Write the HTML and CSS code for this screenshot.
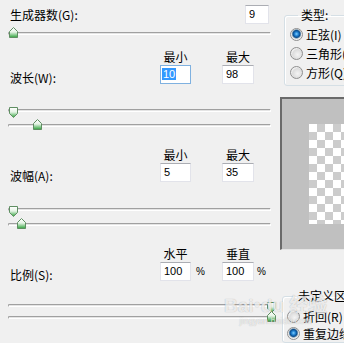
FILE: index.html
```html
<!DOCTYPE html>
<html lang="zh-CN">
<head>
<meta charset="UTF-8" />
<title>波浪</title>
<link rel="stylesheet" href="styles.css">
</head>
<body>
<div class="dialog">
  <div class="left">
    <div class="row-count">
      <span class="label">生成器数(G):</span>
      <span class="field count">9</span>
    </div>
    <div class="slider s1">
      <span class="thumb up" style="left:0px"><svg viewBox="0 0 9 11"><use href="#thumb-up"/></svg></span>
    </div>

    <div class="param p-wave">
      <span class="head c2">最小</span><span class="head c4">最大</span>
      <span class="label">波长(W):</span>
      <span class="field c2 focused"><span class="sel">10</span></span>
      <span class="field c4">98</span>
    </div>
    <div class="slider s2a">
      <span class="thumb down" style="left:0px"><svg viewBox="0 0 9 11"><use href="#thumb-down"/></svg></span>
    </div>
    <div class="slider s2b">
      <span class="thumb up" style="left:24px"><svg viewBox="0 0 9 11"><use href="#thumb-up"/></svg></span>
    </div>

    <div class="param p-amp">
      <span class="head c2">最小</span><span class="head c4">最大</span>
      <span class="label">波幅(A):</span>
      <span class="field c2">5</span>
      <span class="field c4">35</span>
    </div>
    <div class="slider s3a">
      <span class="thumb down" style="left:0px"><svg viewBox="0 0 9 11"><use href="#thumb-down"/></svg></span>
    </div>
    <div class="slider s3b">
      <span class="thumb up" style="left:8px"><svg viewBox="0 0 9 11"><use href="#thumb-up"/></svg></span>
    </div>

    <div class="param p-scale">
      <span class="head c2">水平</span><span class="head c4">垂直</span>
      <span class="label">比例(S):</span>
      <span class="field c2">100</span><span class="pct c3">%</span>
      <span class="field c4">100</span><span class="pct c5">%</span>
    </div>
    <div class="slider s4a">
      <span class="thumb down" style="left:258px"><svg viewBox="0 0 9 11"><use href="#thumb-down"/></svg></span>
    </div>
    <div class="slider s4b">
      <span class="thumb up" style="left:258px"><svg viewBox="0 0 9 11"><use href="#thumb-up"/></svg></span>
    </div>
  </div>

  <div class="right">
    <fieldset class="group g-type">
      <legend>类型:</legend>
      <div class="radio-row"><span class="radio checked"></span>正弦(I)</div>
      <div class="radio-row"><span class="radio"></span>三角形(T)</div>
      <div class="radio-row"><span class="radio"></span>方形(Q)</div>
    </fieldset>

    <div class="preview">
      <div class="checker"></div>
    </div>

    <fieldset class="group g-undef">
      <legend>未定义区域:</legend>
      <div class="radio-row"><span class="radio"></span>折回(R)</div>
      <div class="radio-row"><span class="radio checked"></span>重复边缘像素(E)</div>
    </fieldset>
  </div>
</div>

<!-- watermark over the bottom of the dialog -->
<div class="watermark">
  <span class="wm-text">Bai<span class="wm-paw">●</span>du 经验</span>
  <span class="wm-url">jingyan.baidu.com</span>
</div>

<svg class="defs" width="0" height="0">
  <defs>
    <linearGradient id="tg" x1="0" y1="0" x2="0" y2="1">
      <stop offset="0" stop-color="#ffffff"/>
      <stop offset="0.45" stop-color="#e6f4e6"/>
      <stop offset="1" stop-color="#2fa33c"/>
    </linearGradient>
    <path id="thumb-up" d="M4.5 0.5 L8.5 4.5 L8.5 10.5 L0.5 10.5 L0.5 4.5 Z" fill="url(#tg)" stroke="#5f8e62"/>
    <path id="thumb-down" d="M0.5 0.5 H8.5 V6.5 L4.5 10.5 L0.5 6.5 Z" fill="url(#tg)" stroke="#5f8e62"/>
  </defs>
</svg>
</body>
</html>
```

FILE: styles.css
```css
/* Base */
* {
  box-sizing: border-box;
}
html, body {
  overflow: hidden;
}
body {
  margin: 0;
  width: 344px;
  height: 343px;
  background-color: #f0f0f0;
  color: #000;
  font-family: "Noto Sans CJK SC", "Liberation Sans", sans-serif;
  font-size: 12px;
  position: relative;
}
.defs {
  position: absolute;
}
.dialog {
  display: flex;
}
.left {
  flex: none;
  width: 274px;
  padding-top: 5px;
}
.right {
  flex: none;
  width: 130px;
  margin-left: 6px;
}

/* Text boxes */
.label {
  line-height: 14px;
  white-space: nowrap;
}
.field {
  display: block;
  height: 19px;
  background: #fff;
  border: 1px solid #e2e3ea;
  border-top-color: #abadb3;
  font-family: "Liberation Sans", sans-serif;
  font-size: 11px;
  line-height: 17px;
  padding-left: 3px;
}
.field.focused {
  border-color: #7fb1e0;
  padding-left: 1px;
}
.sel {
  background: #3399ff;
  color: #fff;
  padding: 0 1px;
}
.row-count {
  display: flex;
  align-items: center;
  justify-content: space-between;
  padding: 0 5px 0 10px;
}
.row-count .field {
  width: 24px;
}

/* Parameter blocks: label + two boxes */
.param {
  display: grid;
  grid-template-columns: 150px 31px 31px 32px 20px;
  grid-template-rows: 14px 19px;
  padding-left: 10px;
}
.param .head {
  grid-row: 1;
  text-align: center;
  line-height: 12px;
}
.param .label {
  grid-row: 2;
  grid-column: 1;
  align-self: end;
  line-height: 12px;
  margin-bottom: 0;
}
.param .field {
  grid-row: 2;
}
.c2 { grid-column: 2; }
.c3 { grid-column: 3; }
.c4 { grid-column: 4; }
.c5 { grid-column: 5; }
.pct {
  grid-row: 2;
  align-self: center;
  font-family: "Liberation Sans", sans-serif;
  font-size: 10px;
}
.pct.c3 { padding-left: 5px; }
.pct.c5 { padding-left: 3px; }

.p-wave { margin-top: 16px; }
.p-amp { margin-top: 22px; }
.p-scale { margin-top: 22px; }

/* Sliders */
.slider {
  position: relative;
  margin-left: 8px;
  width: 263px;
  height: 3px;
  border: 1px solid #a0a0a0;
  border-right-color: #fff;
  border-bottom-color: #fff;
  border-radius: 2px 0 0 2px;
  background: #e4e4e4;
}
.thumb {
  position: absolute;
  width: 9px;
  height: 11px;
}
.thumb svg {
  display: block;
  width: 9px;
  height: 11px;
}
.thumb.up { top: -6px; }
.thumb.down { top: -3px; }

.s1 { margin-top: 8px; }
.s2a { margin-top: 25px; }
.s2b { margin-top: 12px; }
.s3a { margin-top: 26px; }
.s3b { margin-top: 12px; }
.s4a { margin-top: 23px; }
.s4b { margin-top: 9px; }

/* Group boxes */
.group {
  margin: 0;
  border: 1px solid #d5dfe5;
  border-radius: 3px;
  box-shadow: inset 1px 1px 0 #fff;
  min-width: 0;
}
.group legend {
  line-height: 14px;
  padding: 0 3px;
  margin-left: 8px;
  white-space: nowrap;
}
.g-type {
  margin: 8px 0 0 4px;
  padding: 3px 0 3px 5px;
}
.g-type .radio-row {
  height: 19px;
}
.g-undef {
  margin: 39px 0 0 2px;
  padding: 5px 0 0 4px;
}
.g-undef .radio-row {
  height: 17px;
}
.radio-row {
  display: flex;
  align-items: center;
  gap: 3px;
  white-space: nowrap;
}
.radio {
  flex: none;
  width: 13px;
  height: 13px;
  border-radius: 50%;
  border: 1px solid #8f8f8f;
  background: radial-gradient(circle at 60% 60%, #f4f4f4 0, #dcdcdc 5px, #eeeeee 6px);
}
.radio.checked {
  background: radial-gradient(circle at 50% 45%, #7fd0ff 0, #1f7fd0 2px, #0b4d8c 3.5px, #9ab0c0 4.5px, #e6e6e6 5px, #f6f6f6 6px);
}

/* Preview */
.preview {
  margin-top: 11px;
  height: 153px;
  background: #c0c0c0;
  border: 2px solid #6a6a6a;
  border-right: none;
  border-bottom: 1px solid #e6e6e6;
  padding: 25px 0 0 27px;
}
.checker {
  width: 100px;
  height: 100px;
  background: repeating-conic-gradient(#cccccc 0 25%, #ffffff 0 50%);
  background-size: 16px 16px;
}

/* Watermark */
.watermark {
  position: absolute;
  left: 224px;
  top: 294px;
  display: flex;
  flex-direction: column;
  align-items: center;
  color: rgba(255, 255, 255, 0.75);
  pointer-events: none;
}
.wm-text {
  font-family: "Liberation Sans", "Noto Sans CJK SC", sans-serif;
  font-size: 19px;
  font-weight: 700;
  line-height: 20px;
  text-shadow: 0 0 1px rgba(0, 0, 0, 0.3);
}
.wm-paw {
  font-size: 12px;
  vertical-align: 4px;
}
.wm-url {
  font-family: "Liberation Sans", sans-serif;
  font-size: 9px;
  line-height: 10px;
  text-shadow: 0 0 1px rgba(0, 0, 0, 0.3);
}
```
